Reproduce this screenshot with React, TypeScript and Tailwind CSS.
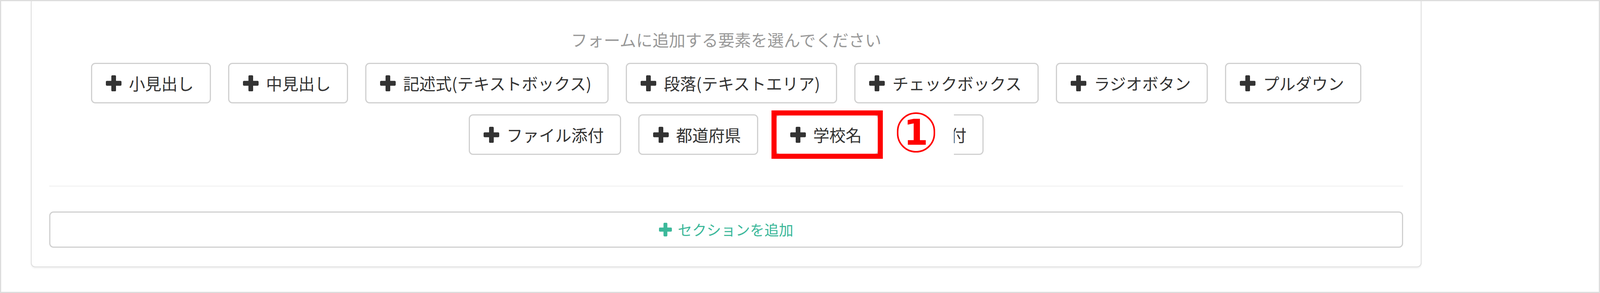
import React from "react";

const JP = { fontFamily: '"Noto Sans CJK JP", "Noto Sans", sans-serif' };

function PlusIcon({ className }: { className: string }) {
  return (
    <svg viewBox="0 0 100 100" preserveAspectRatio="none" className={className} fill="currentColor">
      <rect x="35" y="0" width="30" height="100" rx="7" />
      <rect x="0" y="35" width="100" height="30" rx="7" />
    </svg>
  );
}

const rowItems = [
  "小見出し",
  "中見出し",
  "記述式(テキストボックス)",
  "段落(テキストエリア)",
  "チェックボックス",
  "ラジオボタン",
  "プルダウン",
  "ファイル添付",
  "都道府県",
  "学校名",
  "日付",
];

// red highlight + circled number note laid over the 学校名 button
function Annotation() {
  return (
    <>
      <span className="pointer-events-none absolute -inset-[13px] z-10 border-[13px] border-[#ff0000]" />
      <div className="pointer-events-none absolute left-[274px] top-[-31px] z-10 h-[140px] w-[180px] bg-white">
        <div className="absolute left-[34px] top-[23px] flex h-[103px] w-[98px] items-center justify-center rounded-full border-[4px] border-[#ff0000]">
          <span
            className="text-[90px] font-bold leading-none text-[#ff0000]"
            style={{ fontFamily: '"DejaVu Sans", sans-serif' }}
          >
            1
          </span>
        </div>
      </div>
    </>
  );
}

export default function App() {
  return (
    <div className="h-[751px] w-full overflow-hidden border-[3px] border-[#dddddd] bg-white" style={JP}>
      <div className="ml-[76px] w-[3560px] rounded-b-[11px] border-x-[2px] border-b-[2px] border-[#dddddd] bg-white px-[45px] pb-[48px] pt-[66px] shadow-[0_3px_4px_rgba(0,0,0,0.06)]">
        <p className="text-center text-[42px] leading-[63px] text-[#999999]">
          フォームに追加する要素を選んでください
        </p>

        <div className="mt-[29px] flex flex-wrap justify-center gap-x-[44px] gap-y-[28px]">
          {rowItems.map((label) => (
            <button
              key={label}
              className="relative flex h-[104px] items-center rounded-[11px] border-[3px] border-[#d0d0d0] bg-white pl-[35px] pr-[41px] text-[41.5px] leading-[62px] text-[#333333]"
            >
              <PlusIcon className="mr-[19px] h-[41px] w-[40px] text-[#333333]" />
              <span>{label}</span>
              {label === "学校名" && <Annotation />}
            </button>
          ))}
        </div>

        <div className="mt-[79px] h-[2px] bg-[#eeeeee]" />

        <button className="mt-[64px] flex h-[93px] w-full items-center justify-center rounded-[11px] border-[3px] border-[#d0d0d0] bg-white text-[37px] text-[#3cb89a]">
          <PlusIcon className="mr-[15px] h-[35px] w-[33px]" />
          <span>セクションを追加</span>
        </button>
      </div>
    </div>
  );
}
